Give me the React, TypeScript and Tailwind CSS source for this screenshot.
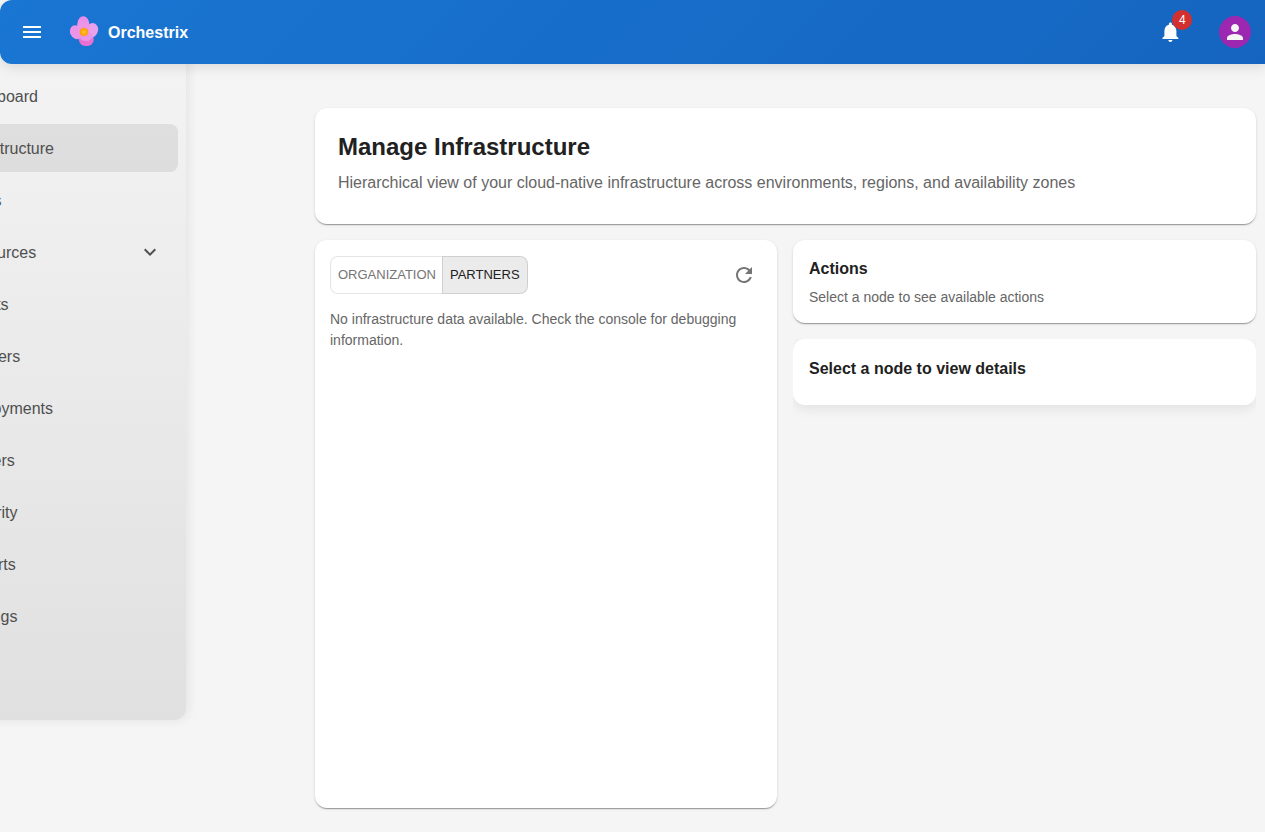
import type { ReactNode } from "react";

type NavItem = { label: string; selected?: boolean; expandable?: boolean };

const NAV: NavItem[] = [
  { label: "Dashboard" },
  { label: "Infrastructure", selected: true },
  { label: "Users" },
  { label: "Resources", expandable: true },
  { label: "Clients" },
  { label: "Partners" },
  { label: "Deployments" },
  { label: "Servers" },
  { label: "Security" },
  { label: "Reports" },
  { label: "Settings" },
];

function Icon({ d, className }: { d: string; className: string }) {
  return (
    <svg viewBox="0 0 24 24" className={className} fill="currentColor" aria-hidden="true">
      <path d={d} />
    </svg>
  );
}

function Flower() {
  return (
    <svg viewBox="0 0 32 32" className="size-8 shrink-0" aria-hidden="true">
      <defs>
        <linearGradient id="petal" x1="0" y1="0" x2="0" y2="1">
          <stop offset="0" stopColor="#e88be9" />
          <stop offset="1" stopColor="#f1a0e6" />
        </linearGradient>
        <radialGradient id="core">
          <stop offset="0" stopColor="#ffc928" />
          <stop offset="1" stopColor="#ff9800" />
        </radialGradient>
      </defs>
      <ellipse cx="18.3" cy="23.6" rx="7.5" ry="6.4" fill="#e96fd3" />
      <ellipse cx="8.2" cy="16.2" rx="6" ry="7.2" transform="rotate(-28 8.2 16.2)" fill="#eb95e9" />
      <ellipse cx="23.5" cy="14.6" rx="6.3" ry="7.8" transform="rotate(28 23.5 14.6)" fill="#eaa0ed" />
      <ellipse cx="15.3" cy="8.5" rx="6.1" ry="8.2" fill="url(#petal)" />
      <ellipse cx="18" cy="20.5" rx="6.5" ry="4.6" fill="#e596e9" />
      <circle cx="15.9" cy="16" r="6" fill="#ef94de" opacity=".7" />
      <circle cx="15.9" cy="16" r="4.1" fill="url(#core)" />
    </svg>
  );
}

function Card({ className, children }: { className: string; children?: ReactNode }) {
  return (
    <section
      className={`rounded-xl bg-white shadow-[0_2px_1px_-1px_rgba(0,0,0,0.2),0_1px_1px_0_rgba(0,0,0,0.14),0_1px_3px_0_rgba(0,0,0,0.12)] ${className}`}
    >
      {children}
    </section>
  );
}

function Header() {
  return (
    <header className="relative z-20 flex h-16 shrink-0 items-center rounded-l-xl bg-[linear-gradient(135deg,#1976d2_0%,#1565c0_100%)] pr-3.5 pl-5 text-white shadow-[0_4px_12px_rgba(0,0,0,0.1)]">
      <button aria-label="Menu" className="size-6">
        <Icon className="size-6" d="M3 18h18v-2H3zm0-5h18v-2H3zm0-7v2h18V6z" />
      </button>
      <div className="ml-6 flex items-center gap-2">
        <Flower />
        <span className="pt-0.5 text-base font-bold">Orchestrix</span>
      </div>
      <div className="ml-auto flex items-center gap-[37px]">
        <button aria-label="Notifications" className="relative size-6">
          <Icon
            className="size-6 translate-x-[0.4px]"
            d="M12 22c1.1 0 2-.9 2-2h-4c0 1.1.89 2 2 2m6-6v-5c0-3.07-1.64-5.64-4.5-6.32V4c0-.83-.67-1.5-1.5-1.5s-1.5.67-1.5 1.5v.68C7.63 5.36 6 7.92 6 11v5l-2 2v1h16v-1z"
          />
          <span className="absolute -top-2.5 left-[14.4px] flex size-5 items-center justify-center rounded-full bg-[#d32f2f] text-xs">
            4
          </span>
        </button>
        <div className="flex size-8 items-center justify-center rounded-full bg-[#9c27b0] text-[#f5f5f5]">
          <Icon
            className="size-6"
            d="M12 12c2.21 0 4-1.79 4-4s-1.79-4-4-4-4 1.79-4 4 1.79 4 4 4m0 2c-2.67 0-8 1.34-8 4v2h16v-2c0-2.66-5.33-4-8-4"
          />
        </div>
      </div>
    </header>
  );
}

function Sidebar() {
  return (
    <nav className="z-10 -mt-16 -ml-[94px] h-[720px] w-[280px] shrink-0 rounded-r-xl bg-[linear-gradient(180deg,#f5f5f5_0%,#e0e0e0_100%)] px-2 pt-[72px] shadow-[2px_0_12px_rgba(0,0,0,0.08)]">
      <ul className="flex flex-col gap-1">
        {NAV.map((item) => (
          <li
            key={item.label}
            className={`flex h-12 items-center justify-between rounded-lg pr-4 pl-[45.7px] text-base text-[#4f4f4f] ${
              item.selected ? "bg-black/8" : ""
            }`}
          >
            <span className="pt-0.5">{item.label}</span>
            {item.expandable && (
              <Icon className="size-6" d="M16.59 8.59 12 13.17 7.41 8.59 6 10l6 6 6-6z" />
            )}
          </li>
        ))}
      </ul>
    </nav>
  );
}

export default function App() {
  return (
    <div className="flex h-[832px] flex-col overflow-hidden bg-[#f5f5f5] font-['Liberation_Sans',Arial,sans-serif] text-[#212121]">
      <Header />
      <div className="flex min-h-0 flex-1">
        <Sidebar />
        <main className="flex min-w-0 flex-1 flex-col gap-4 pt-11 pr-[9px] pl-32">
          <Card className="ml-[0.6px] h-[116px] shrink-0 pt-[23px] pr-6 pl-[23.4px]">
            <h1 className="text-2xl leading-8 font-bold">Manage Infrastructure</h1>
            <p className="mt-2 text-base leading-6 text-[#666]">
              Hierarchical view of your cloud-native infrastructure across environments, regions, and availability
              zones
            </p>
          </Card>
          <div className="grid grid-cols-2 items-start gap-4">
            <Card className="ml-[0.6px] h-[568px] py-4 pr-4 pl-[15.4px]">
              <div className="flex items-center justify-between">
                <div className="flex h-[37.5px] text-[13px] leading-[22.75px]">
                  <button className="rounded-l-lg border border-r-0 border-black/10 pt-px pr-1.5 pl-[7px] text-[#757575]">
                    ORGANIZATION
                  </button>
                  <button className="rounded-r-lg border border-black/12 bg-black/8 px-[7px] pt-px">PARTNERS</button>
                </div>
                <button aria-label="Refresh" className="mr-[5px] text-[#757575]">
                  <Icon
                    className="size-6"
                    d="M17.65 6.35C16.2 4.9 14.21 4 12 4c-4.42 0-7.99 3.58-7.99 8s3.57 8 7.99 8c3.73 0 6.84-2.55 7.73-6h-2.08c-.82 2.33-3.04 4-5.65 4-3.31 0-6-2.69-6-6s2.69-6 6-6c1.66 0 3.14.69 4.22 1.78L13 11h7V4z"
                  />
                </button>
              </div>
              <p className="mt-[15px] text-sm leading-[21px] text-[#666]">
                No infrastructure data available. Check the console for debugging information.
              </p>
            </Card>
            <div className="flex flex-col gap-4">
              <Card className="h-[83px] px-4 pt-4">
                <h2 className="text-base leading-[26px] font-bold">Actions</h2>
                <p className="mt-[5px] text-sm leading-[21px] text-[#666]">Select a node to see available actions</p>
              </Card>
              <div className="overflow-hidden pb-5">
                <section className="h-[66px] rounded-xl bg-white px-4 pt-[17px] shadow-[0_4px_12px_rgba(0,0,0,0.08)]">
                  <h2 className="text-base leading-[26px] font-bold">Select a node to view details</h2>
                </section>
              </div>
            </div>
          </div>
        </main>
      </div>
    </div>
  );
}
